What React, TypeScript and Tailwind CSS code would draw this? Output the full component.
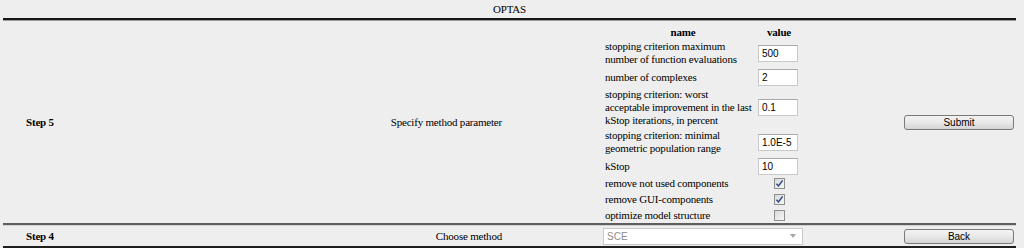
import { ReactNode } from "react";

const serif = "font-['Liberation_Serif','Times_New_Roman',serif]";
const sans = "font-['Liberation_Sans',Arial,sans-serif]";

function TextBox({ value }: { value: string }) {
  return (
    <div
      className={`ml-[3px] flex h-[17px] w-[40px] items-center border border-[#c9c9c9] border-t-[#a9a9a9] bg-white pl-[3px] text-[10px] tracking-normal text-black ${sans}`}
    >
      {value}
    </div>
  );
}

function CheckBox({ checked }: { checked: boolean }) {
  return (
    <div className="flex h-[11px] w-[11px] items-center justify-center border border-[#8f8f8f] bg-gradient-to-br from-[#d9d9d9] to-[#f7f7f7]">
      {checked && (
        <svg width="9" height="9" viewBox="0 0 9 9">
          <path d="M1.5 4.8 L3.5 7 L7.6 1.4" fill="none" stroke="#263f8a" strokeWidth="1.4" />
        </svg>
      )}
    </div>
  );
}

function ParamRow({ lines, h, children }: { lines: string[]; h: string; children: ReactNode }) {
  return (
    <div className={`flex items-center ${h}`}>
      <div className="w-[152px] whitespace-nowrap pl-[2px] leading-[13px]">
        {lines.map((l) => (
          <div key={l}>{l}</div>
        ))}
      </div>
      <div className="flex w-[48px] items-center">{children}</div>
    </div>
  );
}

function CheckRow({ label, checked }: { label: string; checked: boolean }) {
  return (
    <div className="flex h-[16px] items-center">
      <div className="w-[152px] whitespace-nowrap pl-[2px] leading-[13px]">{label}</div>
      <div className="flex w-[48px] items-center justify-center">
        <CheckBox checked={checked} />
      </div>
    </div>
  );
}

function WinButton({ label }: { label: string }) {
  return (
    <div
      className={`flex h-[15px] w-[110px] items-center justify-center rounded-[3px] border border-[#7a7a7a] bg-gradient-to-b from-[#f3f3f3] via-[#e8e8e8] to-[#d4d4d4] text-[10px] tracking-normal text-black ${sans}`}
    >
      {label}
    </div>
  );
}

export default function App() {
  return (
    <div
      className={`h-[248px] w-[1024px] overflow-hidden bg-[#eeeeee] text-[11px] tracking-[-0.2px] text-black ${serif}`}
    >
      <div className="flex h-[18px] items-center justify-center pl-[3px] pr-[8px]">OPTAS</div>
      <div className="ml-[3px] mr-[8px] h-[3px] border-t-2 border-b border-t-[#161616] border-b-[#9c9c9c]" />

      <div className="ml-[3px] mr-[8px] flex h-[202px] items-center">
        <div className="w-[257px] pl-[23px] font-bold">Step 5</div>
        <div className="w-[242px] text-right">Specify method parameter</div>
        <div className="ml-[101px] mt-[4px] flex w-[200px] flex-col self-start">
          <div className="flex h-[14px] items-center font-bold">
            <div className="w-[152px] pl-[8px] text-center">name</div>
            <div className="w-[48px] text-center">value</div>
          </div>
          <ParamRow h="h-[28px]" lines={["stopping criterion maximum", "number of function evaluations"]}>
            <TextBox value="500" />
          </ParamRow>
          <ParamRow h="h-[20px]" lines={["number of complexes"]}>
            <TextBox value="2" />
          </ParamRow>
          <ParamRow
            h="h-[40px]"
            lines={["stopping criterion: worst", "acceptable improvement in the last", "kStop iterations, in percent"]}
          >
            <TextBox value="0.1" />
          </ParamRow>
          <ParamRow h="h-[30px]" lines={["stopping criterion: minimal", "geometric population range"]}>
            <TextBox value="1.0E-5" />
          </ParamRow>
          <ParamRow h="h-[18px]" lines={["kStop"]}>
            <TextBox value="10" />
          </ParamRow>
          <CheckRow label="remove not used components" checked />
          <CheckRow label="remove GUI-components" checked />
          <CheckRow label="optimize model structure" checked={false} />
        </div>
        <div className="ml-[101px]">
          <WinButton label="Submit" />
        </div>
      </div>

      <div className="ml-[3px] mr-[8px] h-[3px] border-t-2 border-b border-t-[#5e5e5e] border-b-[#d0d0d0]" />

      <div className="ml-[3px] mr-[8px] flex h-[20px] items-center">
        <div className="w-[257px] pl-[23px] font-bold">Step 4</div>
        <div className="w-[242px] text-right">Choose method</div>
        <div
          className={`ml-[101px] flex h-[17px] w-[200px] items-center justify-between border border-[#c8c8c8] bg-white pl-[3px] pr-[6px] text-[10px] tracking-normal text-[#8d8d8d] ${sans}`}
        >
          <span>SCE</span>
          <svg width="6" height="4" viewBox="0 0 6 4">
            <path d="M0 0 H6 L3 4 Z" fill="#a5a5a5" />
          </svg>
        </div>
        <div className="ml-[101px]">
          <WinButton label="Back" />
        </div>
      </div>

      <div className="ml-[3px] mr-[8px] h-[2px] bg-[#1e1e1e]" />
    </div>
  );
}
